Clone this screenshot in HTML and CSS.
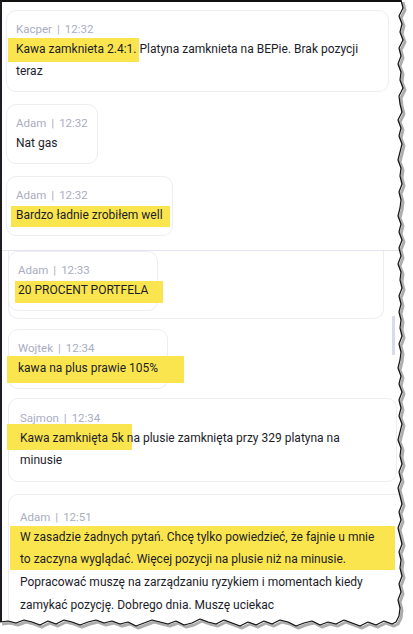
FILE: index.html
```html
<!DOCTYPE html>
<html lang="pl">
<head>
  <meta charset="UTF-8" />
  <meta name="viewport" content="width=device-width, initial-scale=1.0" />
  <title>Czat</title>
  <link rel="stylesheet" href="styles.css">
</head>
<body>
  <div class="sheet">
    <div class="feed feed-top">
      <div class="msg msg-wide">
        <div class="meta">Kacper<span class="bar">|</span>12:32</div>
        <div class="text"><span class="hl hl-a">Kawa zamknieta 2.4:1.</span> Platyna zamknieta na BEPie. Brak pozycji<br>teraz</div>
      </div>
      <div class="msg">
        <div class="meta">Adam<span class="bar">|</span>12:32</div>
        <div class="text">Nat gas</div>
      </div>
      <div class="msg">
        <div class="meta">Adam<span class="bar">|</span>12:32</div>
        <div class="text"><span class="hl hl-b">Bardzo ładnie zrobiłem well</span></div>
      </div>
    </div>

    <div class="feed feed-low">
      <div class="stack">
        <div class="msg msg-in">
          <div class="meta">Adam<span class="bar">|</span>12:33</div>
          <div class="text"><span class="hl hl-c">20 PROCENT PORTFELA</span></div>
        </div>
      </div>
      <div class="msg msg-gap">
        <div class="meta">Wojtek<span class="bar">|</span>12:34</div>
        <div class="text"><span class="hl hl-d">kawa na plus prawie 105%</span></div>
      </div>
      <div class="msg msg-full">
        <div class="meta">Sajmon<span class="bar">|</span>12:34</div>
        <div class="text"><span class="hl hl-e">Kawa zamknięta 5k</span> na plusie zamknięta przy 329 platyna na<br>minusie</div>
      </div>
      <div class="msg msg-full msg-last">
        <div class="meta">Adam<span class="bar">|</span>12:51</div>
        <div class="text">
          <div class="hl-block">W zasadzie żadnych pytań. Chcę tylko powiedzieć, że fajnie u mnie<br>to zaczyna wyglądać. Więcej pozycji na plusie niż na minusie.</div>
          <div class="rest">Popracować muszę na zarządzaniu ryzykiem i momentach kiedy<br>zamykać pozycję. Dobrego dnia. Muszę uciekac</div>
        </div>
      </div>
    </div>

    <div class="thumb"></div>
    <div class="edge-mark"></div>
  </div>

  <svg class="torn" width="413" height="634" viewBox="0 0 413 634">
    <path class="torn-fill" d="M413 0 L401 0 L403 8 L399 16 L402 24 L400 32 L403 40 L399 48 L401 56 L398 64 L401 72 L400 80 L403 88 L399 96 L400 104 L402 112 L398 120 L401 128 L399 136 L402 144 L400 152 L398 160 L401 168 L400 176 L402 184 L399 192 L401 200 L400 208 L398 216 L401 224 L399 232 L402 240 L399 248 L401 256 L398 264 L401 272 L400 280 L402 288 L399 296 L401 304 L399 312 L401 320 L400 328 L402 336 L399 344 L401 352 L400 360 L398 368 L401 376 L399 384 L402 392 L399 400 L401 408 L399 416 L402 424 L400 432 L398 440 L401 448 L400 456 L402 464 L399 472 L401 480 L398 488 L400 496 L402 504 L399 512 L401 520 L398 528 L400 536 L402 544 L399 552 L401 560 L400 568 L402 576 L399 584 L401 592 L398 600 L400 608 L399 616 L396 622 L392 624 L384 621 L376 625 L368 622 L360 626 L352 623 L344 620 L336 624 L328 622 L320 625 L312 621 L304 623 L296 626 L288 622 L280 620 L272 624 L264 621 L256 625 L248 622 L240 626 L232 623 L224 620 L216 624 L208 622 L200 619 L192 623 L184 625 L176 621 L168 624 L160 622 L152 620 L144 623 L136 626 L128 622 L120 624 L112 621 L104 623 L96 620 L88 622 L80 625 L72 622 L64 620 L56 624 L48 621 L40 625 L32 622 L24 620 L16 623 L8 621 L0 622 L0 634 L413 634 Z"/>
    <g class="torn-line">
      <polyline class="shade" points="401,0 403,8 399,16 402,24 400,32 403,40 399,48 401,56 398,64 401,72 400,80 403,88 399,96 400,104 402,112 398,120 401,128 399,136 402,144 400,152 398,160 401,168 400,176 402,184 399,192 401,200 400,208 398,216 401,224 399,232 402,240 399,248 401,256 398,264 401,272 400,280 402,288 399,296 401,304 399,312 401,320 400,328 402,336 399,344 401,352 400,360 398,368 401,376 399,384 402,392 399,400 401,408 399,416 402,424 400,432 398,440 401,448 400,456 402,464 399,472 401,480 398,488 400,496 402,504 399,512 401,520 398,528 400,536 402,544 399,552 401,560 400,568 402,576 399,584 401,592 398,600 400,608 399,616 396,622 392,624 384,621 376,625 368,622 360,626 352,623 344,620 336,624 328,622 320,625 312,621 304,623 296,626 288,622 280,620 272,624 264,621 256,625 248,622 240,626 232,623 224,620 216,624 208,622 200,619 192,623 184,625 176,621 168,624 160,622 152,620 144,623 136,626 128,622 120,624 112,621 104,623 96,620 88,622 80,625 72,622 64,620 56,624 48,621 40,625 32,622 24,620 16,623 8,621 0,622"/>
      <polyline class="edge" points="401,0 403,8 399,16 402,24 400,32 403,40 399,48 401,56 398,64 401,72 400,80 403,88 399,96 400,104 402,112 398,120 401,128 399,136 402,144 400,152 398,160 401,168 400,176 402,184 399,192 401,200 400,208 398,216 401,224 399,232 402,240 399,248 401,256 398,264 401,272 400,280 402,288 399,296 401,304 399,312 401,320 400,328 402,336 399,344 401,352 400,360 398,368 401,376 399,384 402,392 399,400 401,408 399,416 402,424 400,432 398,440 401,448 400,456 402,464 399,472 401,480 398,488 400,496 402,504 399,512 401,520 398,528 400,536 402,544 399,552 401,560 400,568 402,576 399,584 401,592 398,600 400,608 399,616 396,622 392,624 384,621 376,625 368,622 360,626 352,623 344,620 336,624 328,622 320,625 312,621 304,623 296,626 288,622 280,620 272,624 264,621 256,625 248,622 240,626 232,623 224,620 216,624 208,622 200,619 192,623 184,625 176,621 168,624 160,622 152,620 144,623 136,626 128,622 120,624 112,621 104,623 96,620 88,622 80,625 72,622 64,620 56,624 48,621 40,625 32,622 24,620 16,623 8,621 0,622"/>
    </g>
  </svg>
</body>
</html>
```

FILE: styles.css
```css
html, body {
  margin: 0;
  height: 634px;
  overflow: hidden;
  background: #ffffff;
}
body {
  position: relative;
  font-family: Roboto, "Noto Sans", sans-serif;
  color: #1c1d2a;
}
.sheet {
  position: relative;
  width: 411px;
  height: 632px;
  border-top: 2px solid #111;
  border-left: 2px solid #1c1c22;
  overflow: hidden;
}
.feed {
  display: flex;
  flex-direction: column;
  align-items: flex-start;
}
.feed-top {
  padding: 8px 0 14px 4px;
  gap: 12px;
}
.feed-low {
  border-top: 1px solid #e4e3ef;
  padding-left: 6px;
}
.msg {
  box-sizing: border-box;
  width: fit-content;
  background: #fff;
  border: 1px solid #eceef2;
  border-radius: 10px;
  padding: 9px 9px;
}
.msg-wide {
  width: 383px;
}
.meta {
  font-size: 11.5px;
  line-height: 18px;
  color: #a9adc2;
}
.bar {
  margin: 0 5px;
}
.text {
  font-size: 12px;
  line-height: 22px;
}
.hl {
  background: #fbe54f;
}
.hl-a { padding: 4px 3px 6px 8px; margin: 0 -3px 0 -8px; }
.hl-b { padding: 2px 7px 5px 5px; margin: 0 -7px 0 -5px; }
.hl-c { padding: 2px 15px 6px 3px; margin: 0 -15px 0 -3px; }
.hl-d { padding: 5px 26px 8px 11px; margin: 0 -26px 0 -11px; }
.hl-e { padding: 7px 8px 5px 13px; margin: 0 -8px 0 -13px; }

.stack {
  box-sizing: border-box;
  width: 376px;
  border: 1px solid #eceef2;
  border-top: none;
  border-radius: 0 0 10px 10px;
  padding-bottom: 7px;
}
.msg-in {
  margin-left: -1px;
}
.msg-gap {
  margin-top: 10px;
}
.msg-full {
  width: 389px;
  margin-top: 9px;
  padding: 10px 11px;
}
.msg-last {
  width: 420px;
  margin-top: 12px;
  padding-top: 13px;
}
.hl-block {
  box-sizing: border-box;
  width: 385px;
  margin-left: -10px;
  padding-left: 10px;
  background: #fbe54f;
}
.rest {
  padding-top: 1px;
  line-height: 22.5px;
}
.thumb {
  position: absolute;
  left: 390px;
  top: 314px;
  width: 3px;
  height: 39px;
  background: #d8dce8;
}
.edge-mark {
  position: absolute;
  left: -2px;
  top: 445px;
  width: 2px;
  height: 40px;
  background: #6b7388;
}
.torn {
  position: absolute;
  left: 0;
  top: 0;
  pointer-events: none;
}
.torn-fill {
  fill: #ffffff;
}
.torn-line polyline {
  fill: none;
  stroke-linejoin: round;
}
.shade {
  stroke: #6a6a6a;
  stroke-width: 3;
  opacity: 0.55;
  transform: translate(2px, 2px);
}
.edge {
  stroke: #111;
  stroke-width: 1.2;
}
```
